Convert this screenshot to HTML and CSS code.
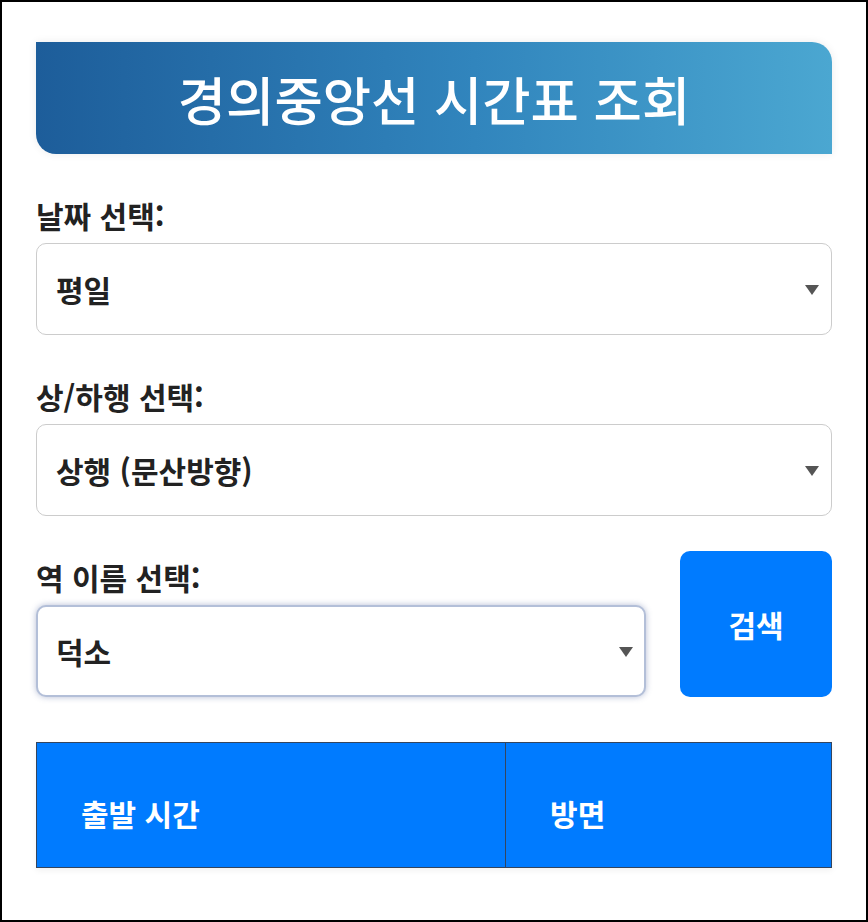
FILE: index.html
```html
<!DOCTYPE html>
<html lang="ko">
<head>
  <meta charset="UTF-8" />
  <title>경의중앙선 시간표 조회</title>
  <link rel="stylesheet" href="styles.css">
</head>
<body>
  <div class="container">
    <h1 class="title">경의중앙선 시간표 조회</h1>

    <div class="field">
      <label for="day">날짜 선택:</label>
      <div class="select-wrap">
        <select id="day">
          <option value="weekday">평일</option>
          <option value="weekend">주말</option>
        </select>
      </div>
    </div>

    <div class="field">
      <label for="direction">상/하행 선택:</label>
      <div class="select-wrap">
        <select id="direction">
          <option value="up">상행 (문산방향)</option>
          <option value="down">하행 (지평방향)</option>
        </select>
      </div>
    </div>

    <div class="station-row">
      <div class="field station-field">
        <label for="station">역 이름 선택:</label>
        <div class="select-wrap">
          <select id="station" class="active">
            <option>덕소</option>
            <option>도심</option>
            <option>팔당</option>
          </select>
        </div>
      </div>
      <button class="search-btn">검색</button>
    </div>

    <table class="timetable">
      <thead>
        <tr>
          <th>출발 시간</th>
          <th>방면</th>
        </tr>
      </thead>
      <tbody id="results"></tbody>
    </table>
  </div>
</body>
</html>
```

FILE: styles.css
```css
html, body {
  margin: 0;
  background: #fff;
}
body {
  box-sizing: border-box;
  height: 922px;
  border: 2px solid #000;
  font-family: "Noto Sans CJK KR", "Noto Sans", sans-serif;
  color: #222;
}
.container {
  padding: 40px 34px 0;
}
.title {
  margin: 0;
  height: 112px;
  display: flex;
  align-items: center;
  justify-content: center;
  font-size: 52.5px;
  font-weight: 500;
  color: #fff;
  background: linear-gradient(90deg, #1d5d9a, #3185bd 55%, #4ba7d1);
  border-radius: 0 20px 0 20px;
  box-shadow: 0 0 8px rgba(0, 0, 0, 0.08);
}
.field {
  margin-top: 43px;
}
.field label {
  display: block;
  font-size: 30px;
  font-weight: 700;
  line-height: 36px;
  margin-bottom: 10px;
}
.select-wrap {
  position: relative;
}
.select-wrap::after {
  content: "";
  position: absolute;
  right: 13px;
  top: 50%;
  margin-top: -4px;
  border-left: 7px solid transparent;
  border-right: 7px solid transparent;
  border-top: 10px solid #555;
  pointer-events: none;
}
select {
  -webkit-appearance: none;
  appearance: none;
  box-sizing: border-box;
  width: 100%;
  height: 92px;
  padding: 0 40px 0 19px;
  font-family: "Noto Sans CJK KR", "Noto Sans", sans-serif;
  font-size: 30px;
  font-weight: 700;
  color: #222;
  background: #fff;
  border: 1px solid #ccc;
  border-radius: 10px;
  outline: none;
}
select.active {
  border: 2px solid #b3bfd8;
  padding-left: 18px;
  box-shadow: 0 0 6px rgba(70, 90, 150, 0.4);
}
.station-row {
  display: flex;
  align-items: flex-end;
  gap: 34px;
  margin-top: 35px;
}
.station-field {
  flex: 1;
  margin-top: 0;
}
.search-btn {
  width: 152px;
  height: 146px;
  border: none;
  border-radius: 10px;
  background: #007bff;
  color: #fff;
  font-family: "Noto Sans CJK KR", "Noto Sans", sans-serif;
  font-size: 30px;
  font-weight: 700;
  cursor: pointer;
}
.timetable {
  width: 100%;
  margin-top: 45px;
  border-collapse: collapse;
  box-shadow: 0 3px 6px rgba(0, 0, 0, 0.05);
}
.timetable th {
  background: #007bff;
  color: #fff;
  border: 1px solid #34455e;
  text-align: left;
  font-size: 30px;
  font-weight: 700;
  line-height: 36px;
  padding: 52px 20px 36px 44px;
}
.timetable th:first-child {
  width: 59%;
}
```
